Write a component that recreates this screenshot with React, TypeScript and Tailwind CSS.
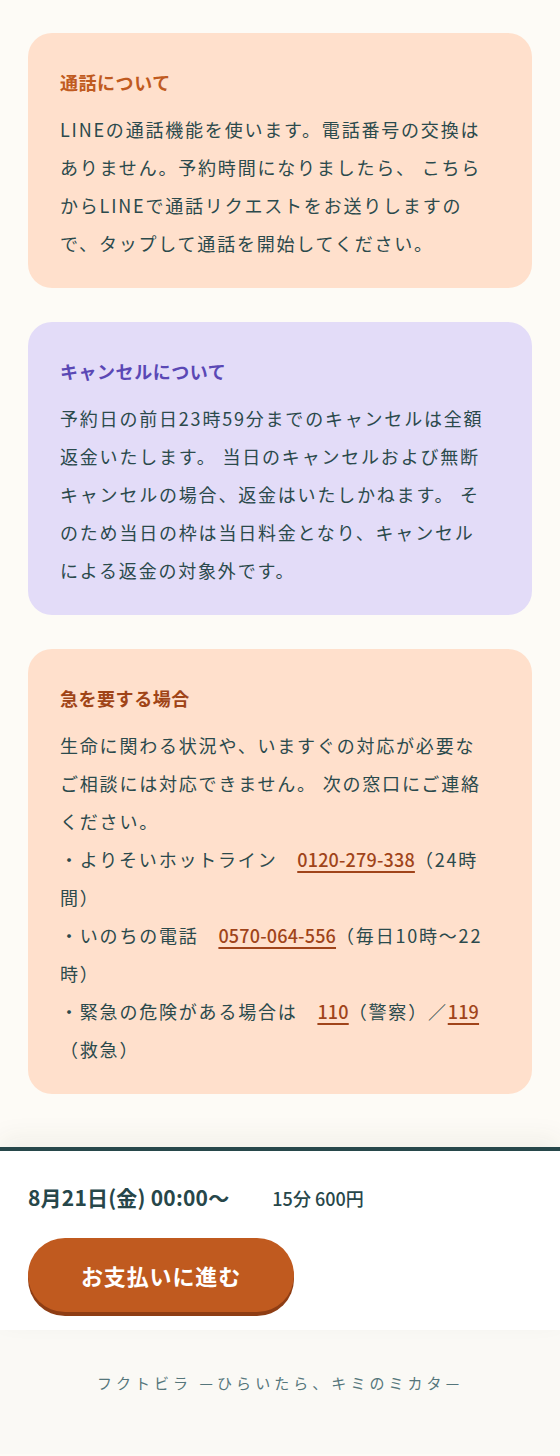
import React from "react";

const font = { fontFamily: '"Noto Sans CJK JP", "Noto Sans", sans-serif' };

function Card({
  bg,
  titleColor,
  title,
  children,
}: {
  bg: string;
  titleColor: string;
  title: string;
  children: React.ReactNode;
}) {
  return (
    <section className={`rounded-[24px] ${bg} px-[32px] pt-[35px] pb-[26px]`}>
      <h2 className={`text-[18px] leading-[28px] font-bold tracking-[0.03em] ${titleColor}`}>{title}</h2>
      <div className="mt-[14px] text-[18px] leading-[38px] tracking-[0.1em] text-[#2b4a4c]">{children}</div>
    </section>
  );
}

function Tel({ children }: { children: React.ReactNode }) {
  return (
    <a className="font-medium text-[#a0441a] underline underline-offset-[4px] decoration-[2px] tracking-[0.01em]" href="#">
      {children}
    </a>
  );
}

export default function App() {
  return (
    <div style={font} className="min-h-[1456px] bg-[#fdfbf6] text-[#2b4a4c]">
      <main className="flex flex-col gap-[34px] px-[28px] pt-[33px] pb-[53px]">
        <Card bg="bg-[#ffe0cc]" titleColor="text-[#c05a20]" title="通話について">
          LINEの通話機能を使います。電話番号の交換は<br />
          ありません。予約時間になりましたら、 こちら<br />
          からLINEで通話リクエストをお送りしますの<br />
          で、タップして通話を開始してください。
        </Card>
        <Card bg="bg-[#e3dcf8]" titleColor="text-[#5a48b5]" title="キャンセルについて">
          予約日の前日23時59分までのキャンセルは全額<br />
          返金いたします。 当日のキャンセルおよび無断<br />
          キャンセルの場合、返金はいたしかねます。 そ<br />
          のため当日の枠は当日料金となり、キャンセル<br />
          による返金の対象外です。
        </Card>
        <Card bg="bg-[#ffe0cc]" titleColor="text-[#a04417]" title="急を要する場合">
          生命に関わる状況や、いますぐの対応が必要な<br />
          ご相談には対応できません。 次の窓口にご連絡<br />
          ください。<br />
          ・よりそいホットライン　<Tel>0120-279-338</Tel>（24時<br />
          間）<br />
          ・いのちの電話　<Tel>0570-064-556</Tel>（毎日10時〜22<br />
          時）<br />
          ・緊急の危険がある場合は　<Tel>110</Tel>（警察）／<Tel>119</Tel><br />
          （救急）
        </Card>
      </main>
      <div className="relative border-t-[4px] border-[#27474a] bg-white px-[28px] pt-[32px] pb-[14px] shadow-[0_-10px_24px_rgba(60,60,40,0.06)]">
        <div className="flex items-baseline text-[#27474a]">
          <span className="text-[21px] leading-[28px] font-bold tracking-[0.01em]">8月21日(金) 00:00〜</span>
          <span className="ml-[43px] text-[18px] leading-[28px] font-medium">15分 600円</span>
        </div>
        <button className="mt-[26px] flex h-[74px] w-[266px] items-center justify-center rounded-full bg-[#c05a1f] text-[22px] font-bold tracking-[0.04em] text-white shadow-[0_4px_0_#8e3d14]">
          お支払いに進む
        </button>
        <div className="h-[4px]" />
      </div>
      <footer className="bg-[#faf9f5] pt-[42px] pb-[60px] text-center text-[15px] leading-[22px] tracking-[0.27em] text-[#55767b]">
        フクトビラ —ひらいたら、キミのミカタ—
      </footer>
    </div>
  );
}
